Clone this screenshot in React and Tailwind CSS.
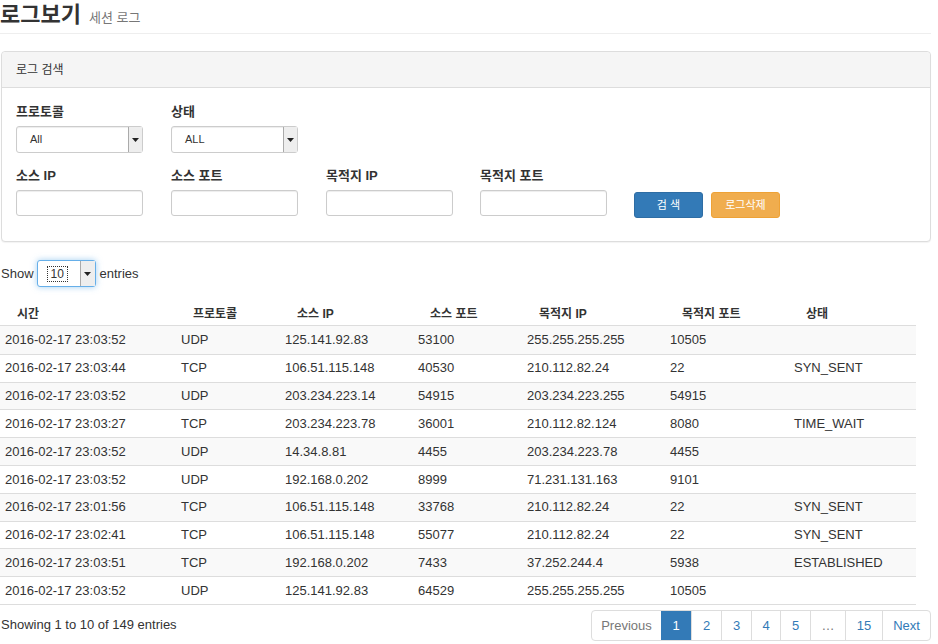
import React from "react";

const font = { fontFamily: '"Liberation Sans", "Noto Sans CJK KR", Arial, sans-serif' };

const rows = [
  ["2016-02-17 23:03:52", "UDP", "125.141.92.83", "53100", "255.255.255.255", "10505", ""],
  ["2016-02-17 23:03:44", "TCP", "106.51.115.148", "40530", "210.112.82.24", "22", "SYN_SENT"],
  ["2016-02-17 23:03:52", "UDP", "203.234.223.14", "54915", "203.234.223.255", "54915", ""],
  ["2016-02-17 23:03:27", "TCP", "203.234.223.78", "36001", "210.112.82.124", "8080", "TIME_WAIT"],
  ["2016-02-17 23:03:52", "UDP", "14.34.8.81", "4455", "203.234.223.78", "4455", ""],
  ["2016-02-17 23:03:52", "UDP", "192.168.0.202", "8999", "71.231.131.163", "9101", ""],
  ["2016-02-17 23:01:56", "TCP", "106.51.115.148", "33768", "210.112.82.24", "22", "SYN_SENT"],
  ["2016-02-17 23:02:41", "TCP", "106.51.115.148", "55077", "210.112.82.24", "22", "SYN_SENT"],
  ["2016-02-17 23:03:51", "TCP", "192.168.0.202", "7433", "37.252.244.4", "5938", "ESTABLISHED"],
  ["2016-02-17 23:03:52", "UDP", "125.141.92.83", "64529", "255.255.255.255", "10505", ""],
];

const headers = ["시간", "프로토콜", "소스 IP", "소스 포트", "목적지 IP", "목적지 포트", "상태"];
const widths = ["w-[176px]", "w-[104px]", "w-[133px]", "w-[109px]", "w-[143px]", "w-[124px]", "w-[127px]"];

function Caret() {
  return (
    <svg width="7" height="4" viewBox="0 0 7 4">
      <path d="M0 0 L7 0 L3.5 4 Z" fill="#222" />
    </svg>
  );
}

function FakeSelect({ value }) {
  return (
    <div className="flex h-[27px] w-[127px] items-stretch rounded-[3px] border border-[#ccc] bg-white shadow-[inset_0_1px_1px_rgba(0,0,0,0.075)]">
      <div className="flex flex-1 items-center pl-[13px] text-[11px] text-[#333]">{value}</div>
      <div className="flex w-[14px] items-center justify-center border-l border-[#aaa] bg-[#eee]">
        <Caret />
      </div>
    </div>
  );
}

function Field({ label, children }) {
  return (
    <div className="flex w-[127px] flex-col">
      <div className="mb-[6px] h-[16px] text-[13px] font-bold leading-[16px] text-[#333]">{label}</div>
      {children}
    </div>
  );
}

function TextInput() {
  return <div className="h-[26px] w-[127px] rounded-[3px] border border-[#ccc] bg-white shadow-[inset_0_1px_1px_rgba(0,0,0,0.075)]" />;
}

export default function App() {
  return (
    <div className="h-[644px] w-[938px] overflow-hidden bg-white text-[13px] text-[#333]" style={font}>
      {/* Header */}
      <div className="mr-[7px] flex h-[34px] items-baseline border-b border-[#eee] pt-[2px]">
        <span className="text-[22px] font-bold leading-[26px] text-[#333]">로그보기</span>
        <span className="ml-[8px] text-[13px] leading-[20px] text-[#777]">세션 로그</span>
      </div>

      {/* Panel */}
      <div className="ml-[1px] mr-[7px] mt-[17px] h-[191px] rounded-[4px] border border-[#ddd] bg-white shadow-[0_1px_1px_rgba(0,0,0,0.05)]">
        <div className="flex h-[36px] items-center rounded-t-[4px] border-b border-[#ddd] bg-[#f5f5f5] px-[14px] text-[12px] text-[#333]">
          로그 검색
        </div>
        <div className="px-[14px] pt-[16px]">
          <div className="flex gap-[28px]">
            <Field label="프로토콜">
              <FakeSelect value="All" />
            </Field>
            <Field label="상태">
              <FakeSelect value="ALL" />
            </Field>
          </div>
          <div className="mt-[15px] flex items-end">
            <div className="flex gap-[28px]">
              <Field label="소스 IP">
                <TextInput />
              </Field>
              <Field label="소스 포트">
                <TextInput />
              </Field>
              <Field label="목적지 IP">
                <TextInput />
              </Field>
              <div className="ml-[-1px]">
                <Field label="목적지 포트">
                  <TextInput />
                </Field>
              </div>
            </div>
            <div className="mb-[-2px] ml-[27px] flex gap-[8px]">
              <div className="flex h-[26px] w-[69px] items-center justify-center rounded-[3px] border border-[#2e6da4] bg-[#337ab7] text-[11px] text-white">
                검 색
              </div>
              <div className="flex h-[26px] w-[69px] items-center justify-center rounded-[3px] border border-[#eea236] bg-[#f0ad4e] text-[11px] text-white">
                로그삭제
              </div>
            </div>
          </div>
        </div>
      </div>

      {/* Show entries */}
      <div className="mt-[18px] flex items-center pl-[1px] text-[13px]">
        <span>Show</span>
        <div className="ml-[3px] flex h-[27px] w-[59px] items-stretch rounded-[3px] border border-[#66afe9] bg-white shadow-[0_0_6px_rgba(102,175,233,0.6)]">
          <div className="flex flex-1 items-center pl-[9px]">
            <span className="border border-dotted border-[#333] px-[3px] text-[12px] leading-[14px]">10</span>
          </div>
          <div className="flex w-[15px] items-center justify-center border-l border-[#aaa] bg-[#eee]">
            <Caret />
          </div>
        </div>
        <span className="ml-[4px]">entries</span>
      </div>

      {/* Table */}
      <div className="mt-[13px] w-[916px]">
        <div className="flex h-[26px] items-center border-b border-[#ddd] pt-[3px] text-[12px] font-bold">
          {headers.map((h, i) => (
            <div key={i} className={`${widths[i]} pl-[17px]`}>
              {h}
            </div>
          ))}
        </div>
        {rows.map((r, ri) => (
          <div
            key={ri}
            className={`flex h-[27.8px] items-center text-[13px] ${ri > 0 ? "border-t border-[#ddd]" : ""} ${ri % 2 === 0 ? "bg-[#f9f9f9]" : "bg-white"}`}
          >
            {r.map((c, ci) => (
              <div key={ci} className={`${widths[ci]} pl-[5px]`}>
                {c}
              </div>
            ))}
          </div>
        ))}
        <div className="border-t border-[#ddd]" />
      </div>

      {/* Footer */}
      <div className="mr-[7px] mt-[5px] flex items-center justify-between">
        <div className="pb-[2px] pl-[1px] text-[13px]">Showing 1 to 10 of 149 entries</div>
        <div className="flex h-[31px] rounded-[4px] border border-[#ddd] text-[13px] text-[#337ab7]">
          <div className="flex w-[69px] items-center justify-center text-[#777]">Previous</div>
          <div className="flex w-[30px] items-center justify-center bg-[#337ab7] text-white">1</div>
          <div className="flex w-[30px] items-center justify-center border-l border-[#ddd]">2</div>
          <div className="flex w-[30px] items-center justify-center border-l border-[#ddd]">3</div>
          <div className="flex w-[29px] items-center justify-center border-l border-[#ddd]">4</div>
          <div className="flex w-[30px] items-center justify-center border-l border-[#ddd]">5</div>
          <div className="flex w-[35px] items-center justify-center border-l border-[#ddd] text-[#777]">…</div>
          <div className="flex w-[37px] items-center justify-center border-l border-[#ddd]">15</div>
          <div className="flex w-[48px] items-center justify-center border-l border-[#ddd]">Next</div>
        </div>
      </div>
    </div>
  );
}
